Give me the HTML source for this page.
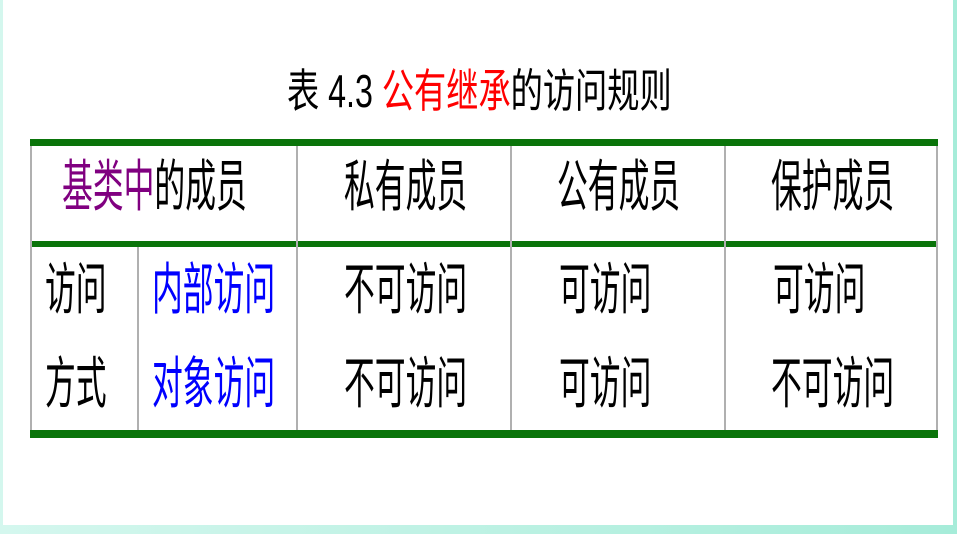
<!DOCTYPE html>
<html><head><meta charset="utf-8"><style>
body{margin:0;width:957px;height:534px;overflow:hidden;background:linear-gradient(90deg,#d4f7ee,#a6ecd9);position:relative;font-family:"Liberation Sans","Noto Sans CJK SC",sans-serif}
#w{position:absolute;left:3px;top:0;width:950px;height:525px;background:#fff}
.t{position:absolute;white-space:nowrap;font-size:56px;line-height:56px;color:#000;transform:scaleX(0.55);transform-origin:left}
.g{position:absolute;background:#0a740a}
.v{position:absolute;background:#b0b0b0;width:2px}
</style></head><body>
<div id="w"></div>
<div class="t" style="left:287px;top:68px;font-size:46px;line-height:46px;transform:scaleX(0.70)">表 4.3 <span style="color:#f00">公有继承</span>的访问规则</div>
<div class="g" style="left:30px;top:139px;width:908px;height:7px"></div>
<div class="g" style="left:30px;top:241px;width:908px;height:6px"></div>
<div class="g" style="left:30px;top:430px;width:908px;height:8px"></div>
<div class="v" style="left:30px;top:146px;height:284px"></div>
<div class="v" style="left:936px;top:146px;height:284px"></div>
<div class="v" style="left:296px;top:146px;height:284px"></div>
<div class="v" style="left:510px;top:146px;height:284px"></div>
<div class="v" style="left:724px;top:146px;height:284px"></div>
<div class="v" style="left:137px;top:247px;height:183px"></div>
<div class="t" style="left:62px;top:159px"><span style="color:#800080">基类中</span>的成员</div>
<div class="t" style="left:344px;top:159px">私有成员</div>
<div class="t" style="left:557px;top:159px">公有成员</div>
<div class="t" style="left:771px;top:159px">保护成员</div>
<div class="t" style="left:45px;top:262px">访问</div>
<div class="t" style="left:45px;top:356px">方式</div>
<div class="t" style="left:152px;top:262px;color:#00f">内部访问</div>
<div class="t" style="left:152px;top:356px;color:#00f">对象访问</div>
<div class="t" style="left:344px;top:262px">不可访问</div>
<div class="t" style="left:344px;top:356px">不可访问</div>
<div class="t" style="left:559px;top:262px">可访问</div>
<div class="t" style="left:559px;top:356px">可访问</div>
<div class="t" style="left:773px;top:262px">可访问</div>
<div class="t" style="left:771px;top:356px">不可访问</div>
</body></html>
